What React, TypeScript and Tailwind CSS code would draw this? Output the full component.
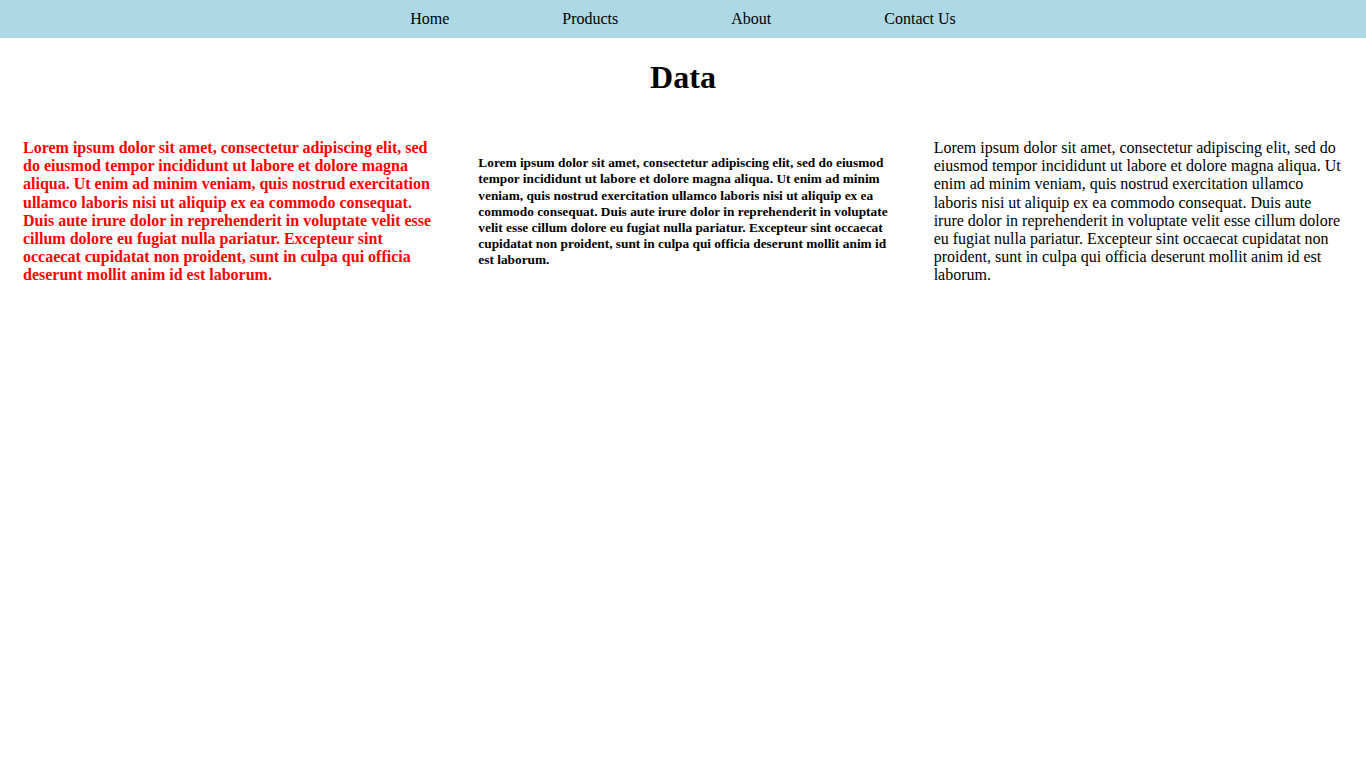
const text =
  "Lorem ipsum dolor sit amet, consectetur adipiscing elit, sed do eiusmod tempor incididunt ut labore et dolore magna aliqua. Ut enim ad minim veniam, quis nostrud exercitation ullamco laboris nisi ut aliquip ex ea commodo consequat. Duis aute irure dolor in reprehenderit in voluptate velit esse cillum dolore eu fugiat nulla pariatur. Excepteur sint occaecat cupidatat non proident, sunt in culpa qui officia deserunt mollit anim id est laborum.";

const links = ["Home", "Products", "About", "Contact Us"];

export default function App() {
  return (
    <div className="min-h-screen bg-white text-black font-['Liberation_Serif',serif]">
      <nav className="h-[38px] bg-[#add8e6] flex items-center justify-center gap-[113px] text-base">
        {links.map((l) => (
          <a key={l} href="#" className="leading-[18px]">
            {l}
          </a>
        ))}
      </nav>
      <h1 className="text-[32px] font-bold text-center leading-[37px] my-[21px]">Data</h1>
      <div className="flex items-center pt-[22px]">
        <div className="w-1/3 px-[23px]">
          <p className="text-base font-bold leading-[18.2px] text-[#ff0000]">{text}</p>
        </div>
        <div className="w-1/3 px-[23px]">
          <p className="text-[13.33px] font-bold leading-[16.2px]">{text}</p>
        </div>
        <div className="w-1/3 px-[23px]">
          <p className="text-base leading-[18.2px]">{text}</p>
        </div>
      </div>
    </div>
  );
}
